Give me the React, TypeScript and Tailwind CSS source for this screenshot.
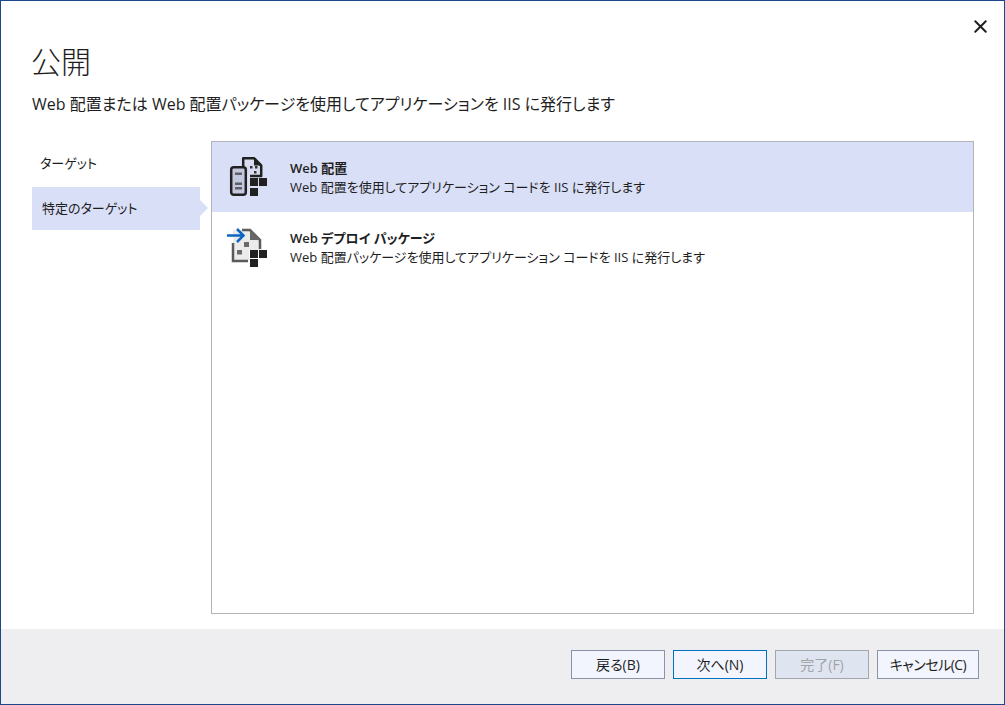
import { X } from 'lucide-react';

const font = "font-['Open_Sans','Noto_Sans_CJK_JP',sans-serif] [font-feature-settings:'palt']";

function WebDeployIcon() {
  return (
    <svg width="44" height="44" viewBox="0 0 44 44" className="shrink-0 overflow-visible">
      <path d="M17.2 13V3.2H28L35.2 10.5V21H24" fill="#d9dcf0" stroke="#212121" strokeWidth="2.5" strokeLinejoin="round" />
      <path d="M28 3.2V10.5H35.2Z" fill="#212121" />
      <rect x="5.2" y="12.2" width="14.6" height="27.6" rx="2.5" fill="#c3c8de" stroke="#212121" strokeWidth="2.5" />
      <rect x="9" y="17.5" width="7" height="2.5" fill="#5e6066" />
      <rect x="9" y="27.5" width="7" height="2.5" fill="#5e6066" />
      <rect x="9" y="32" width="7" height="2.5" fill="#5e6066" />
      <rect x="24" y="11" width="2.5" height="2.5" fill="#333" />
      <rect x="29" y="11" width="2.5" height="2.5" fill="#333" />
      <rect x="28" y="16" width="2.5" height="2.5" fill="#333" />
      <rect x="24" y="23" width="8" height="8" fill="#212121" />
      <rect x="33" y="23" width="8" height="8" fill="#212121" />
      <rect x="24" y="33" width="8" height="8" fill="#212121" />
    </svg>
  );
}

function DeployPackageIcon() {
  return (
    <svg width="44" height="44" viewBox="0 0 44 44" className="shrink-0 overflow-visible">
      <path d="M7 36V5H24L34 15V25H23V36Z" fill="#ebebeb" />
      <path d="M7 18V36H22" fill="none" stroke="#5a5a5a" strokeWidth="2.5" />
      <path d="M16 5H24L34 15V24" fill="none" stroke="#5a5a5a" strokeWidth="2.5" />
      <path d="M24 4L34.5 15H24Z" fill="#666666" />
      <rect x="11" y="25" width="5" height="4.5" fill="#6a6a6a" />
      <rect x="18" y="17" width="5" height="5" fill="#6a6a6a" />
      <rect x="24" y="25" width="8" height="8" fill="#212121" />
      <rect x="33" y="25" width="8" height="8" fill="#212121" />
      <rect x="24" y="34" width="8" height="8" fill="#212121" />
      <path d="M1 10.5H17M11 4L17.5 10.5L11 17" fill="none" stroke="#0d66c2" strokeWidth="2.5" />
    </svg>
  );
}

function Row({ icon, title, desc, selected }: { icon: React.ReactNode; title: string; desc: string; selected?: boolean }) {
  return (
    <div className={`h-[70px] flex items-center pl-[14px] ${selected ? 'bg-[#d9dff6]' : 'bg-white'}`}>
      <div className="w-[64px] flex">{icon}</div>
      <div className="flex flex-col pt-[2px] text-[13px] leading-[19px] text-[#1e1e1e]">
        <span className="font-semibold">{title}</span>
        <span>{desc}</span>
      </div>
    </div>
  );
}

function Btn({ label, className }: { label: string; className: string }) {
  return (
    <button className={`h-[29px] border text-[14px] leading-none flex items-center justify-center ${className}`}>
      {label}
    </button>
  );
}

export default function App() {
  return (
    <div className={`${font} w-[1005px] h-[705px] bg-white border border-[#1b478c] flex flex-col overflow-hidden relative`}>
      <button className="absolute top-[15px] right-[13px] text-[#1e1e1e]">
        <X size={21} strokeWidth={2.3} />
      </button>
      <div className="flex-1 pl-[30px] pr-[30px] pt-[40px] flex flex-col min-h-0">
        <h1 className="text-[30px] leading-[42px] font-light text-[#1e1e1e]">公開</h1>
        <p className="mt-[9px] ml-[1px] text-[16px] leading-[24px] text-[#1e1e1e]">
          Web 配置または Web 配置パッケージを使用してアプリケーションを IIS に発行します
        </p>
        <div className="mt-[25px] flex h-[473px]">
          <nav className="w-[180px] shrink-0 flex flex-col text-[13px] text-[#1e1e1e]">
            <div className="h-[45px] flex items-center pl-[9px]">ターゲット</div>
            <div className="relative ml-[1px] mt-[1px] w-[168px] h-[43px] bg-[#d9dff6] flex items-center pl-[10px]">
              特定のターゲット
              <div className="absolute left-full top-[13px] w-0 h-0 border-y-[8px] border-y-transparent border-l-[8px] border-l-[#d9dff6]" />
            </div>
          </nav>
          <div className="flex-1 border border-[#b0b3b8] bg-white">
            <Row
              selected
              icon={<WebDeployIcon />}
              title="Web 配置"
              desc="Web 配置を使用してアプリケーション コードを IIS に発行します"
            />
            <Row
              icon={<DeployPackageIcon />}
              title="Web デプロイ パッケージ"
              desc="Web 配置パッケージを使用してアプリケーション コードを IIS に発行します"
            />
          </div>
        </div>
      </div>
      <div className="h-[75px] bg-[#eeeef0] flex items-start justify-end gap-2 pt-[21px] pr-[25px]">
        <Btn label="戻る(B)" className="w-[94px] bg-[#f2f5fd] border-[#8a93a7] text-[#1e1e1e]" />
        <Btn label="次へ(N)" className="w-[94px] bg-[#f2f5fd] border-[#0071c1] text-[#1e1e1e]" />
        <Btn label="完了(F)" className="w-[94px] bg-[#dfe5f0] border-[#a2a6ad] text-[#a2a4a8]" />
        <Btn label="キャンセル(C)" className="w-[102px] tracking-[-0.5px] bg-[#f2f5fd] border-[#8a93a7] text-[#1e1e1e]" />
      </div>
    </div>
  );
}
